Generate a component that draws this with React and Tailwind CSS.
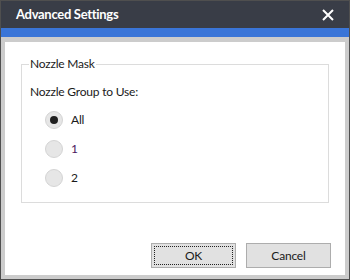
import { useState } from "react";

const options = ["All", "1", "2"];

function Radio({ label, checked, onSelect, labelClass }) {
    return (
        <label className="flex items-center h-[29px] cursor-default" onClick={onSelect}>
            <span className="w-[18px] h-[18px] rounded-full bg-[#e6e6e6] border border-[#d4d4d4] flex items-center justify-center">
                {checked && <span className="w-[8px] h-[8px] rounded-full bg-[#1f1f1f]" />}
            </span>
            <span className={`ml-[8px] ${labelClass}`}>{label}</span>
        </label>
    );
}

export default function App() {
    const [group, setGroup] = useState("All");

    return (
        <div
            className="w-[350px] h-[280px] border border-[#4f4f4f] bg-[#cccccc] flex flex-col text-[12px] tracking-[-0.2px] text-[#1a1a1a]"
            style={{ fontFamily: 'Lato, "Liberation Sans", Arial, sans-serif' }}
        >
            <div className="h-[27px] bg-[#393d47] flex items-center justify-between pl-[15px] pr-[15px] shrink-0">
                <span className="text-white font-bold text-[13px] tracking-[-0.3px]">Advanced Settings</span>
                <svg width="12" height="12" viewBox="0 0 12 12" className="mt-[1px]">
                    <path d="M1 1 L11 11 M11 1 L1 11" stroke="#ffffff" strokeWidth="2" />
                </svg>
            </div>
            <div className="h-[9px] bg-[#3a75d8] shrink-0" />

            <div className="flex-1 px-[4px] pt-[5px] pb-[4px] flex">
                <div className="flex-1 bg-white flex flex-col px-[16px]">
                    <fieldset className="mt-[15px] h-[146px] border border-[#dcdcdc] pl-[7px] pr-[8px]">
                        <legend className="px-[1px] leading-[14px]">Nozzle Mask</legend>
                        <div className="mt-[12px] ml-[1px]">Nozzle Group to Use:</div>
                        <div className="mt-[4px] ml-[16px] flex flex-col">
                            {options.map((opt) => (
                                <Radio
                                    key={opt}
                                    label={opt}
                                    checked={group === opt}
                                    onSelect={() => setGroup(opt)}
                                    labelClass={opt === "1" ? "text-[#4b1760]" : ""}
                                />
                            ))}
                        </div>
                    </fieldset>

                    <div className="mt-auto mb-[7px] flex justify-end gap-[10px] -mr-[2px]">
                        <button className="w-[85px] h-[25px] bg-[#e1e1e1] border border-[#adadad] p-[2px]">
                            <span className="w-full h-full flex items-center justify-center border border-dotted border-[#222]">
                                OK
                            </span>
                        </button>
                        <button className="w-[85px] h-[25px] bg-[#e1e1e1] border border-[#adadad]">
                            Cancel
                        </button>
                    </div>
                </div>
            </div>
        </div>
    );
}
